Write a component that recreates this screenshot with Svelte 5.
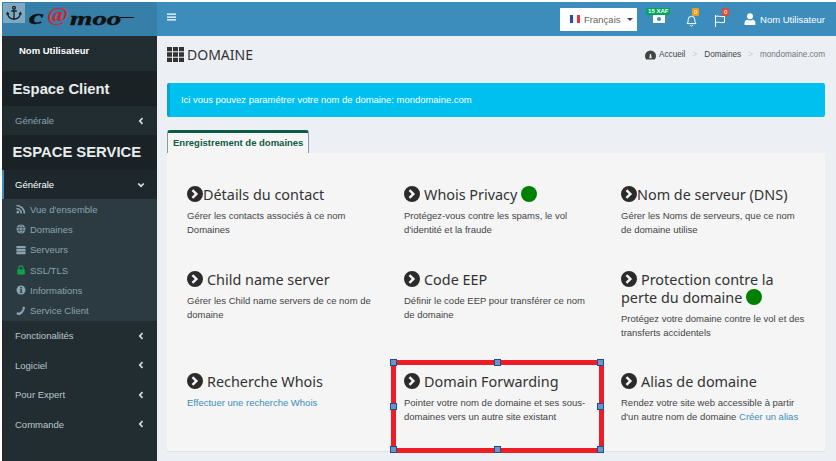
<script>
  const chevron = 'M8 0a8 8 0 1 0 0 16A8 8 0 0 0 8 0zM6.3 3.2 11.1 8l-4.8 4.8-1.7-1.7L7.7 8 4.6 4.9z';

  const subItems = [
    { label: "Vue d'ensemble", icon: 'rss' },
    { label: 'Domaines', icon: 'globe' },
    { label: 'Serveurs', icon: 'server' },
    { label: 'SSL/TLS', icon: 'lock' },
    { label: 'Informations', icon: 'info' },
    { label: 'Service Client', icon: 'phone' }
  ];

  const lowerMenu = ['Fonctionalités', 'Logiciel', 'Pour Expert', 'Commande'];

  const cards = [
    { title: 'Détails du contact', tight: true, text: 'Gérer les contacts associés à ce nom Domaines' },
    { title: 'Whois Privacy', dot: true, text: "Protégez-vous contre les spams, le vol d'identité et la fraude" },
    { title: 'Nom de serveur (DNS)', tight: true, text: 'Gérer les Noms de serveurs, que ce nom de domaine utilise' },
    { title: 'Child name server', text: 'Gérer les Child name servers de ce nom de domaine' },
    { title: 'Code EEP', text: 'Définir le code EEP pour transférer ce nom de domaine' },
    { title: 'Protection contre la perte du domaine', dot: true, text: 'Protégez votre domaine contre le vol et des transferts accidentels' },
    { title: 'Recherche Whois', link: 'Effectuer une recherche Whois' },
    { title: 'Domain Forwarding', text: 'Pointer votre nom de domaine et ses sous-domaines vers un autre site existant' },
    { title: 'Alias de domaine', text: "Rendez votre site web accessible à partir d'un autre nom de domaine", after: 'Créer un alias' }
  ];

  const handles = [
    [0, 0], [50, 0], [100, 0],
    [0, 50], [100, 50],
    [0, 100], [50, 100], [100, 100]
  ];
</script>

{#snippet arrow(dir)}
  <svg class="arrow" width="6" height="8" viewBox="0 0 6 8" style="transform: rotate({dir}deg)">
    <path d="M4.5 1.200 1.800 4l2.700 2.800" fill="none" stroke="currentColor" stroke-width="1.7" />
  </svg>
{/snippet}

{#snippet subIcon(name)}
  <svg class="sub-icon" class:green={name === 'lock'} width="11" height="11" viewBox="0 0 12 12" fill="currentColor">
    {#if name === 'rss'}
      <circle cx="2.2" cy="9.8" r="1.6" />
      <path d="M.6 4.6v2a4.8 4.8 0 0 1 4.8 4.8h2A6.8 6.8 0 0 0 .6 4.6z" />
      <path d="M.6.8v2a8.6 8.6 0 0 1 8.6 8.6h2A10.6 10.6 0 0 0 .6.8z" />
    {:else if name === 'globe'}
      <circle cx="6" cy="6" r="5.4" />
      <path d="M.8 4.4h10.4M.8 7.6h10.4M6 .6c-3 3-3 7.8 0 10.8M6 .6c3 3 3 7.8 0 10.8" fill="none" stroke="#2e3d44" stroke-width=".8" />
    {:else if name === 'server'}
      <path d="M.5 1.200h11v2.800H.5zM.5 4.700h11v2.800H.5zM.5 8.200h11V11H.5z" />
    {:else if name === 'lock'}
      <path d="M1.500 5.200h9V11.500h-9z" />
      <path d="M3.400 5.400V3.600a2.600 2.600 0 0 1 5.200 0v1.800" fill="none" stroke="currentColor" stroke-width="1.400" />
    {:else if name === 'info'}
      <circle cx="6" cy="6" r="5.4" />
      <path d="M5 2.400h2v1.700H5zM4.700 5h2.400v3.600h.7v1H4.400v-1h.9V6h-.6z" fill="#2e3d44" />
    {:else}
      <path d="M9.800.6 7.600 1.400l.5 2.400-1.200 1.500L5 7.400l-1.600.8-1.900-1L.6 9.400c1 1.600 3.600 2.200 5.600.4 2.300-1.900 4.200-5 4.500-7.200.1-.8-.3-1.600-.9-2z" />
    {/if}
  </svg>
{/snippet}

<div class="page">
  <aside class="sidebar">
    <div class="logo">
      <span class="anchor">
        <svg width="16" height="16" viewBox="0 0 16 16" fill="none" stroke="#16222a" stroke-width="1.3">
          <circle cx="8" cy="2.8" r="1.4" />
          <path d="M8 4.200V14.400M5.200 6h5.600M1.600 8.600c.4 3.400 3 5.200 6.400 5.800 3.400-.6 6-2.400 6.400-5.800" />
          <path d="M.6 9.600 1.600 7.600 3 9.400M15.400 9.600l-1-2-1.400 1.800" />
        </svg>
      </span>
      <span class="wordmark"><span class="w-c">c</span><span class="at">@</span><span class="w-moo">moo</span></span>
    </div>

    <div class="user">Nom Utilisateur</div>

    <h2 class="section client">Espace Client</h2>
    <div class="item client-item">Générale {@render arrow(0)}</div>

    <h2 class="section service">ESPACE SERVICE</h2>
    <div class="item open">Générale {@render arrow(-90)}</div>
    <ul class="sub">
      {#each subItems as s}
        <li>{@render subIcon(s.icon)}{s.label}</li>
      {/each}
    </ul>
    {#each lowerMenu as label}
      <div class="item lower">{label} {@render arrow(0)}</div>
    {/each}
  </aside>

  <div class="main">
    <header class="topbar">
      <svg class="burger" width="9" height="8" viewBox="0 0 9 8" fill="#fff">
        <path d="M0 .5h9v1.300H0zM0 3.400h9v1.300H0zM0 6.300h9v1.300H0z" />
      </svg>
      <div class="top-right">
        <div class="lang">
          <span class="flag"><i class="fl-b"></i><i class="fl-w"></i><i class="fl-r"></i></span>
          Français
          <span class="caret"></span>
        </div>
        <div class="money">
          <span class="xaf">15 XAF</span>
          <svg width="12" height="8" viewBox="0 0 12 8"><rect width="12" height="8" fill="#fff" /><circle cx="6" cy="4" r="2" fill="#3c8dbc" /></svg>
        </div>
        <div class="bell">
          <svg width="11" height="13" viewBox="0 0 11 13" fill="none" stroke="#fff" stroke-width="1">
            <path d="M1 9.600c1-1 1.200-2 1.200-4a3.300 3.300 0 0 1 6.600 0c0 2 .2 3 1.200 4z" />
            <path d="M4.200 11.200a1.400 1.400 0 0 0 2.600 0" />
          </svg>
          <span class="badge orange">0</span>
        </div>
        <div class="flag-icon">
          <svg width="12" height="13" viewBox="0 0 12 13" fill="none" stroke="#fff" stroke-width="1">
            <path d="M1.500 1v12M1.500 2.400c3-1 5 1 9 0v6c-4 1-6-1-9 0" />
          </svg>
          <span class="badge red">0</span>
        </div>
        <div class="account">
          <svg width="12" height="12" viewBox="0 0 12 12" fill="#fff">
            <circle cx="6" cy="3.200" r="3" />
            <path d="M.6 12V9.600C.6 7.800 2 7 3.400 6.800c1.600 1 3.600 1 5.200 0 1.400.2 2.800 1 2.800 2.800V12z" />
          </svg>
          Nom Utilisateur
        </div>
      </div>
    </header>

    <div class="content">
      <div class="title-row">
        <h1>
          <svg width="17" height="15" viewBox="0 0 17 15" fill="#333">
            <path d="M0 0h5v4.300H0zM6 0h5v4.300H6zM12 0h5v4.300h-5zM0 5.300h5v4.400H0zM6 5.300h5v4.400H6zM12 5.300h5v4.400h-5zM0 10.700h5V15H0zM6 10.700h5V15H6zM12 10.700h5V15h-5z" />
          </svg>
          DOMAINE
        </h1>
        <nav class="crumbs">
          <svg width="11" height="10" viewBox="0 0 12 10" fill="#444">
            <path d="M6 0a6 6 0 0 0-6 6c0 1.500.5 2.800 1.400 4h9.200c.9-1.200 1.400-2.500 1.400-4a6 6 0 0 0-6-6zm1.300 8.500H4.700L5.500 4h1z" />
          </svg>
          <span class="c1">Accueil</span><span class="sep">&gt;</span><span class="c1">Domaines</span><span class="sep">&gt;</span><span class="c2">mondomaine.com</span>
        </nav>
      </div>

      <div class="callout">Ici vous pouvez paramétrer votre nom de domaine: mondomaine.com</div>

      <div class="tab">Enregistrement de domaines</div>
      <section class="panel">
        {#each cards as c}
          <article class="card">
            <h3 class:tight={c.tight}>
              <svg class="chev" width="16" height="16" viewBox="0 0 16 16"><path d={chevron} fill="#2b2b2b" fill-rule="evenodd" /></svg>{c.title}{#if c.dot}<span class="dot"></span>{/if}
            </h3>
            {#if c.link}
              <p><a href="#top">{c.link}</a></p>
            {:else}
              <p>{c.text}{#if c.after}{' '}<a href="#top">{c.after}</a>{/if}</p>
            {/if}
          </article>
        {/each}
      </section>
    </div>
  </div>

  <div class="highlight">
    {#each handles as [x, y]}
      <span class="handle" style="left: {x}%; top: {y}%"></span>
    {/each}
  </div>
</div>

<style>
  :global(body) {
    margin: 0;
    background: #fff;
  }

  .page {
    position: relative;
    display: flex;
    width: 836px;
    height: 461px;
    padding: 2px 0 0 2px;
    box-sizing: border-box;
    overflow: hidden;
    font-family: "Liberation Sans", Arial, sans-serif;
    font-size: 10px;
    color: #444;
  }

  .sidebar {
    width: 155px;
    flex-shrink: 0;
    background: #222d32;
    color: #b8c7ce;
  }

  .logo {
    position: relative;
    height: 34px;
    background: #367fa9;
  }
  .anchor {
    position: absolute;
    left: 1px;
    top: 1px;
    width: 22px;
    height: 20px;
    background: #7fa9c2;
    display: flex;
    align-items: center;
    justify-content: center;
  }
  .wordmark {
    position: absolute;
    left: 27px;
    top: 4px;
    height: 20px;
    font-family: "Liberation Serif", serif;
    font-weight: 700;
    font-style: italic;
    color: #111;
    white-space: nowrap;
  }
  .w-c {
    position: absolute;
    left: 0;
    top: 0;
    font-size: 22px;
    line-height: 22px;
    transform: scaleX(1.5);
    transform-origin: left;
    -webkit-text-stroke: .4px #111;
  }
  .at {
    position: absolute;
    left: 18px;
    top: -1px;
    font-size: 19px;
    line-height: 19px;
    color: #d9232a;
    font-style: normal;
    transform: scaleX(1.2);
    transform-origin: left;
  }
  .w-moo {
    position: absolute;
    left: 41px;
    top: 2.500px;
    font-size: 18px;
    line-height: 20px;
    transform: scaleX(1.6);
    transform-origin: left;
    -webkit-text-stroke: .4px #111;
  }
  .w-moo::after {
    content: '';
    position: absolute;
    left: 31px;
    top: 8px;
    width: 8.500px;
    height: 1px;
    background: #111;
  }

  .user {
    height: 35px;
    padding: 9px 0 0 17px;
    box-sizing: border-box;
    font-size: 9.500px;
    font-weight: 700;
    color: #fff;
  }

  .section {
    margin: 0;
    background: #1a2226;
    color: #e8eced;
    font-weight: 700;
    font-size: 14.800px;
    padding-left: 10.500px;
  }
  .section.client {
    height: 35px;
    line-height: 36px;
  }
  .section.service {
    height: 35px;
    line-height: 35px;
  }

  .item {
    display: flex;
    justify-content: space-between;
    align-items: center;
    height: 29.500px;
    padding: 0 13px 0 13px;
    font-size: 9.500px;
    color: #b8c7ce;
  }
  .client-item {
    height: 29px;
    color: #8aa4af;
  }
  .item.open {
    height: 29px;
    background: #1e282c;
    color: #fff;
    border-left: 2px solid #3c8dbc;
    padding-left: 11px;
  }
  .arrow {
    color: #d5dde1;
  }

  .sub {
    list-style: none;
    margin: 0;
    padding: 0;
    background: #2c3b41;
    color: #8aa4af;
    font-size: 9.500px;
  }
  .sub li {
    display: flex;
    align-items: center;
    height: 20.330px;
    padding-left: 14px;
  }
  .sub-icon {
    width: 10px;
    height: 10px;
    margin-right: 4px;
  }
  .sub-icon.green {
    color: #0fa14a;
  }

  .main {
    flex: 1;
    min-width: 0;
    display: flex;
    flex-direction: column;
    background: #ecf0f5;
  }

  .topbar {
    height: 34px;
    flex-shrink: 0;
    background: #3c8dbc;
    display: flex;
    align-items: center;
    padding: 0 0 0 10px;
  }
  .burger {
    margin-top: -4px;
  }
  .top-right {
    margin-left: auto;
    display: flex;
    align-items: center;
    color: #fff;
    font-size: 9.500px;
    padding-right: 11px;
  }
  .lang {
    width: 77px;
    height: 23px;
    box-sizing: border-box;
    background: #fff;
    color: #666;
    display: flex;
    align-items: center;
    padding-left: 10px;
    margin-right: 9px;
    font-size: 9.500px;
  }
  .flag {
    display: flex;
    width: 10px;
    height: 8px;
    margin-right: 4px;
  }
  .flag i {
    flex: 1;
  }
  .fl-b { background: #2b4a9b; }
  .fl-w { background: #f3f3f3; }
  .fl-r { background: #e2373f; }
  .caret {
    margin-left: 6px;
    border: 3px solid transparent;
    border-top-color: #444;
    border-bottom: 0;
  }
  .money {
    position: relative;
    width: 24px;
    height: 16px;
    display: flex;
    justify-content: center;
    align-items: flex-start;
    margin-right: 16px;
  }
  .money svg {
    margin: 4px 0 0 2px;
  }
  .xaf {
    position: absolute;
    top: -3px;
    left: 0;
    background: #00a65a;
    color: #fff;
    font-size: 6px;
    font-weight: 700;
    line-height: 7px;
    padding: 0 2px;
    white-space: nowrap;
    border-radius: 1px;
  }
  .bell,
  .flag-icon {
    position: relative;
    width: 14px;
    height: 16px;
    display: flex;
    align-items: flex-end;
  }
  .bell {
    margin-right: 14px;
  }
  .flag-icon {
    margin-right: 16px;
  }
  .badge {
    position: absolute;
    top: -3px;
    right: 1px;
    width: 7px;
    height: 8px;
    font-size: 6px;
    line-height: 8px;
    text-align: center;
    border-radius: 1px;
    color: #fff;
  }
  .orange { background: #f39c12; }
  .red {
    background: #dd4b39;
    right: -1px;
  }
  .account {
    display: flex;
    align-items: center;
    gap: 4px;
  }

  .content {
    padding: 0 11px 0 10px;
    flex: 1;
    min-height: 0;
  }

  .title-row {
    display: flex;
    justify-content: space-between;
    align-items: center;
    height: 37px;
    margin-bottom: 10px;
  }
  h1 {
    margin: -1px 0 0;
    display: flex;
    align-items: center;
    gap: 3px;
    font-family: "Noto Sans", sans-serif;
    font-weight: 400;
    font-size: 14px;
    color: #333;
  }
  .crumbs {
    display: flex;
    align-items: center;
    font-size: 8.200px;
  }
  .crumbs svg {
    margin-right: 3px;
  }
  .c1 { color: #444; }
  .c2 { color: #777; }
  .sep {
    color: #ccc;
    margin: 0 7px;
  }

  .callout {
    height: 34px;
    line-height: 34px;
    box-sizing: border-box;
    background: #00c0ef;
    border-left: 3px solid #00a7d0;
    border-radius: 2px;
    padding-left: 11px;
    color: #fff;
    font-size: 9.450px;
    margin-bottom: 13px;
  }

  .tab {
    display: inline-block;
    box-sizing: border-box;
    height: 23px;
    border: 1px solid #8c9aa3;
    border-top: 3px solid #0a5c46;
    border-bottom: 0;
    border-radius: 3px 3px 0 0;
    background: #f5f5f5;
    color: #0e5a44;
    font-size: 9.500px;
    font-weight: 700;
    line-height: 19px;
    padding: 0 5px;
    vertical-align: top;
  }

  .panel {
    background: #f5f5f5;
    border-bottom: 1px solid #dfe3e8;
    display: grid;
    grid-template-columns: repeat(3, 217px);
    grid-template-rows: 85px 102px 69px;
    padding: 33px 0 0 20px;
    height: 299px;
    box-sizing: border-box;
  }

  .card {
    width: 185px;
  }
  h3 {
    margin: 0 0 5px;
    font-family: "Noto Sans", sans-serif;
    font-weight: 400;
    font-size: 14.400px;
    line-height: 18px;
    color: #333;
  }
  .chev {
    vertical-align: -2px;
    margin-right: 4px;
  }
  h3.tight .chev {
    margin-right: 0;
  }
  .dot {
    display: inline-block;
    width: 16px;
    height: 16px;
    border-radius: 50%;
    background: #008000;
    margin-left: 3.500px;
    vertical-align: -2px;
  }
  p {
    margin: 0;
    font-size: 9.500px;
    line-height: 13.500px;
    color: #444;
  }
  a {
    color: #3c8dbc;
    text-decoration: none;
  }

  .highlight {
    position: absolute;
    left: 394px;
    top: 363px;
    width: 207px;
    height: 87px;
    outline: 5px solid #ee1c25;
    outline-offset: -2px;
  }
  .handle {
    position: absolute;
    width: 7px;
    height: 7px;
    margin: -4px 0 0 -4px;
    background: #6f93c4;
    border: 1px solid #1f4e8c;
    box-sizing: border-box;
  }
</style>
